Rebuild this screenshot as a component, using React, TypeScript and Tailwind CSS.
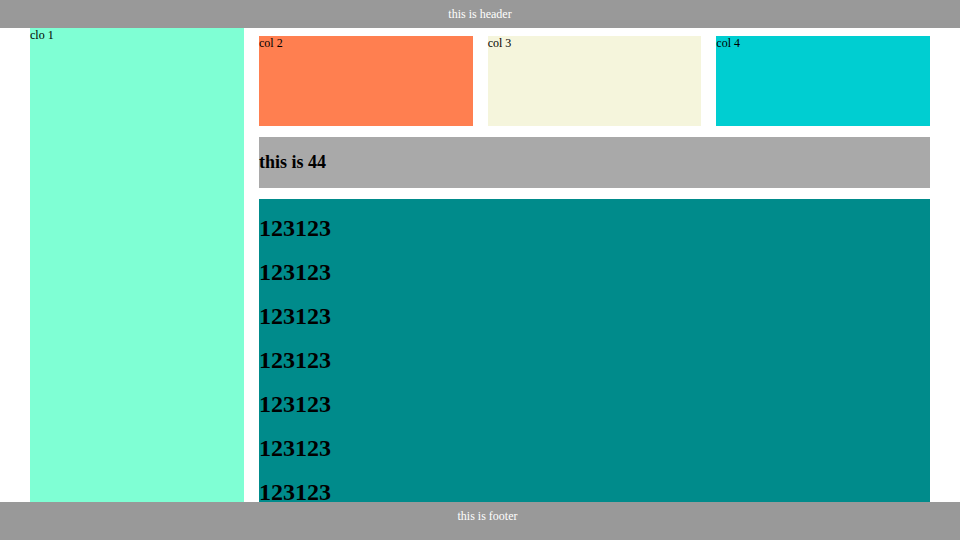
import React from "react";

export default function App() {
  const rows = [1, 2, 3, 4, 5, 6, 7];
  return (
    <div className="font-['Liberation_Serif',serif] text-[12px] leading-[normal] text-black bg-white min-h-[540px]">
      <div className="h-[28px] bg-[#999999] text-white text-center leading-[28px]">this is header</div>
      <div className="flex mx-[30px] gap-[15px]">
        <div className="w-[214px] shrink-0 bg-[#7fffd4]">clo 1</div>
        <div className="flex-1 pt-[8px] flex flex-col gap-[11px]">
          <div className="grid grid-cols-3 gap-[15px]">
            <div className="h-[90px] bg-[#ff7f50]">col 2</div>
            <div className="h-[90px] bg-[#f5f5dc]">col 3</div>
            <div className="h-[90px] bg-[#00ced1]">col 4</div>
          </div>
          <div className="bg-[#a9a9a9] flow-root">
            <h2 className="text-[18px] font-bold my-[15px] leading-[normal]">this is 44</h2>
          </div>
          <div className="bg-[#008b8b] flow-root">
            {rows.map((r) => (
              <h1 key={r} className="text-[24px] font-bold my-[16px] first:mt-[15px] leading-[28px]">123123</h1>
            ))}
          </div>
        </div>
      </div>
      <div className="fixed bottom-0 left-0 right-0 h-[38px] bg-[#999999] text-white text-center leading-[28px] pl-[15px]">this is footer</div>
    </div>
  );
}
